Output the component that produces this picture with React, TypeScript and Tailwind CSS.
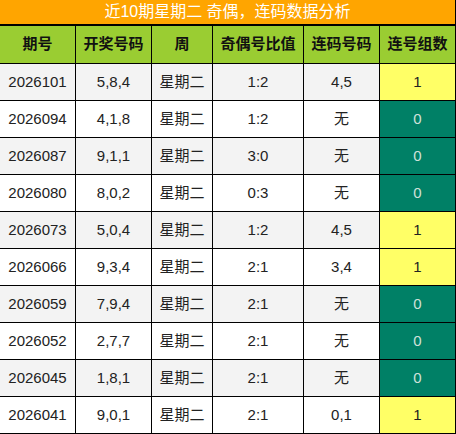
const rows = [
  ["2026101", "5,8,4", "星期二", "1:2", "4,5", 1],
  ["2026094", "4,1,8", "星期二", "1:2", "无", 0],
  ["2026087", "9,1,1", "星期二", "3:0", "无", 0],
  ["2026080", "8,0,2", "星期二", "0:3", "无", 0],
  ["2026073", "5,0,4", "星期二", "1:2", "4,5", 1],
  ["2026066", "9,3,4", "星期二", "2:1", "3,4", 1],
  ["2026059", "7,9,4", "星期二", "2:1", "无", 0],
  ["2026052", "2,7,7", "星期二", "2:1", "无", 0],
  ["2026045", "1,8,1", "星期二", "2:1", "无", 0],
  ["2026041", "9,0,1", "星期二", "2:1", "0,1", 1],
] as const;

const widths = ["w-[76px]", "w-[76px]", "w-[61px]", "w-[91px]", "w-[76px]", "w-[76px]"];
const heads = ["期号", "开奖号码", "周", "奇偶号比值", "连码号码", "连号组数"];

const App = () => {
  return (
    <div
      className="w-[456px] h-[434px] bg-white overflow-hidden"
      style={{ fontFamily: '"Liberation Sans", "Noto Sans CJK SC", sans-serif' }}
    >
      {/* title */}
      <div className="h-[26px] bg-[#ffa500] border-b-2 border-black border-r border-r-black flex items-center justify-center text-white text-[16px] leading-none pb-[1px]">
        近10期星期二 奇偶，连码数据分析
      </div>

      {/* header */}
      <div className="flex h-[38px] bg-[#9acd32]">
        {heads.map((h, i) => (
          <div
            key={h}
            className={`${widths[i]} border-r border-b border-black flex items-center justify-center font-bold text-[15px] text-[#111]`}
          >
            {h}
          </div>
        ))}
      </div>

      {rows.map((r, idx) => (
        <div key={r[0]} className={`flex h-[37px] ${idx % 2 === 0 ? "bg-[#f3f3f3]" : "bg-white"}`}>
          {r.slice(0, 5).map((c, i) => (
            <div
              key={i}
              className={`${widths[i]} border-r border-b border-black flex items-center justify-center text-[15px] text-[#222]`}
            >
              {c}
            </div>
          ))}
          <div
            className={`w-[76px] border-r border-b border-black flex items-center justify-center text-[15px] ${
              r[5] === 1 ? "bg-[#ffff66] text-[#222]" : "bg-[#008066] text-[#cfe0da]"
            }`}
          >
            {r[5]}
          </div>
        </div>
      ))}
    </div>
  );
};

export default App;
